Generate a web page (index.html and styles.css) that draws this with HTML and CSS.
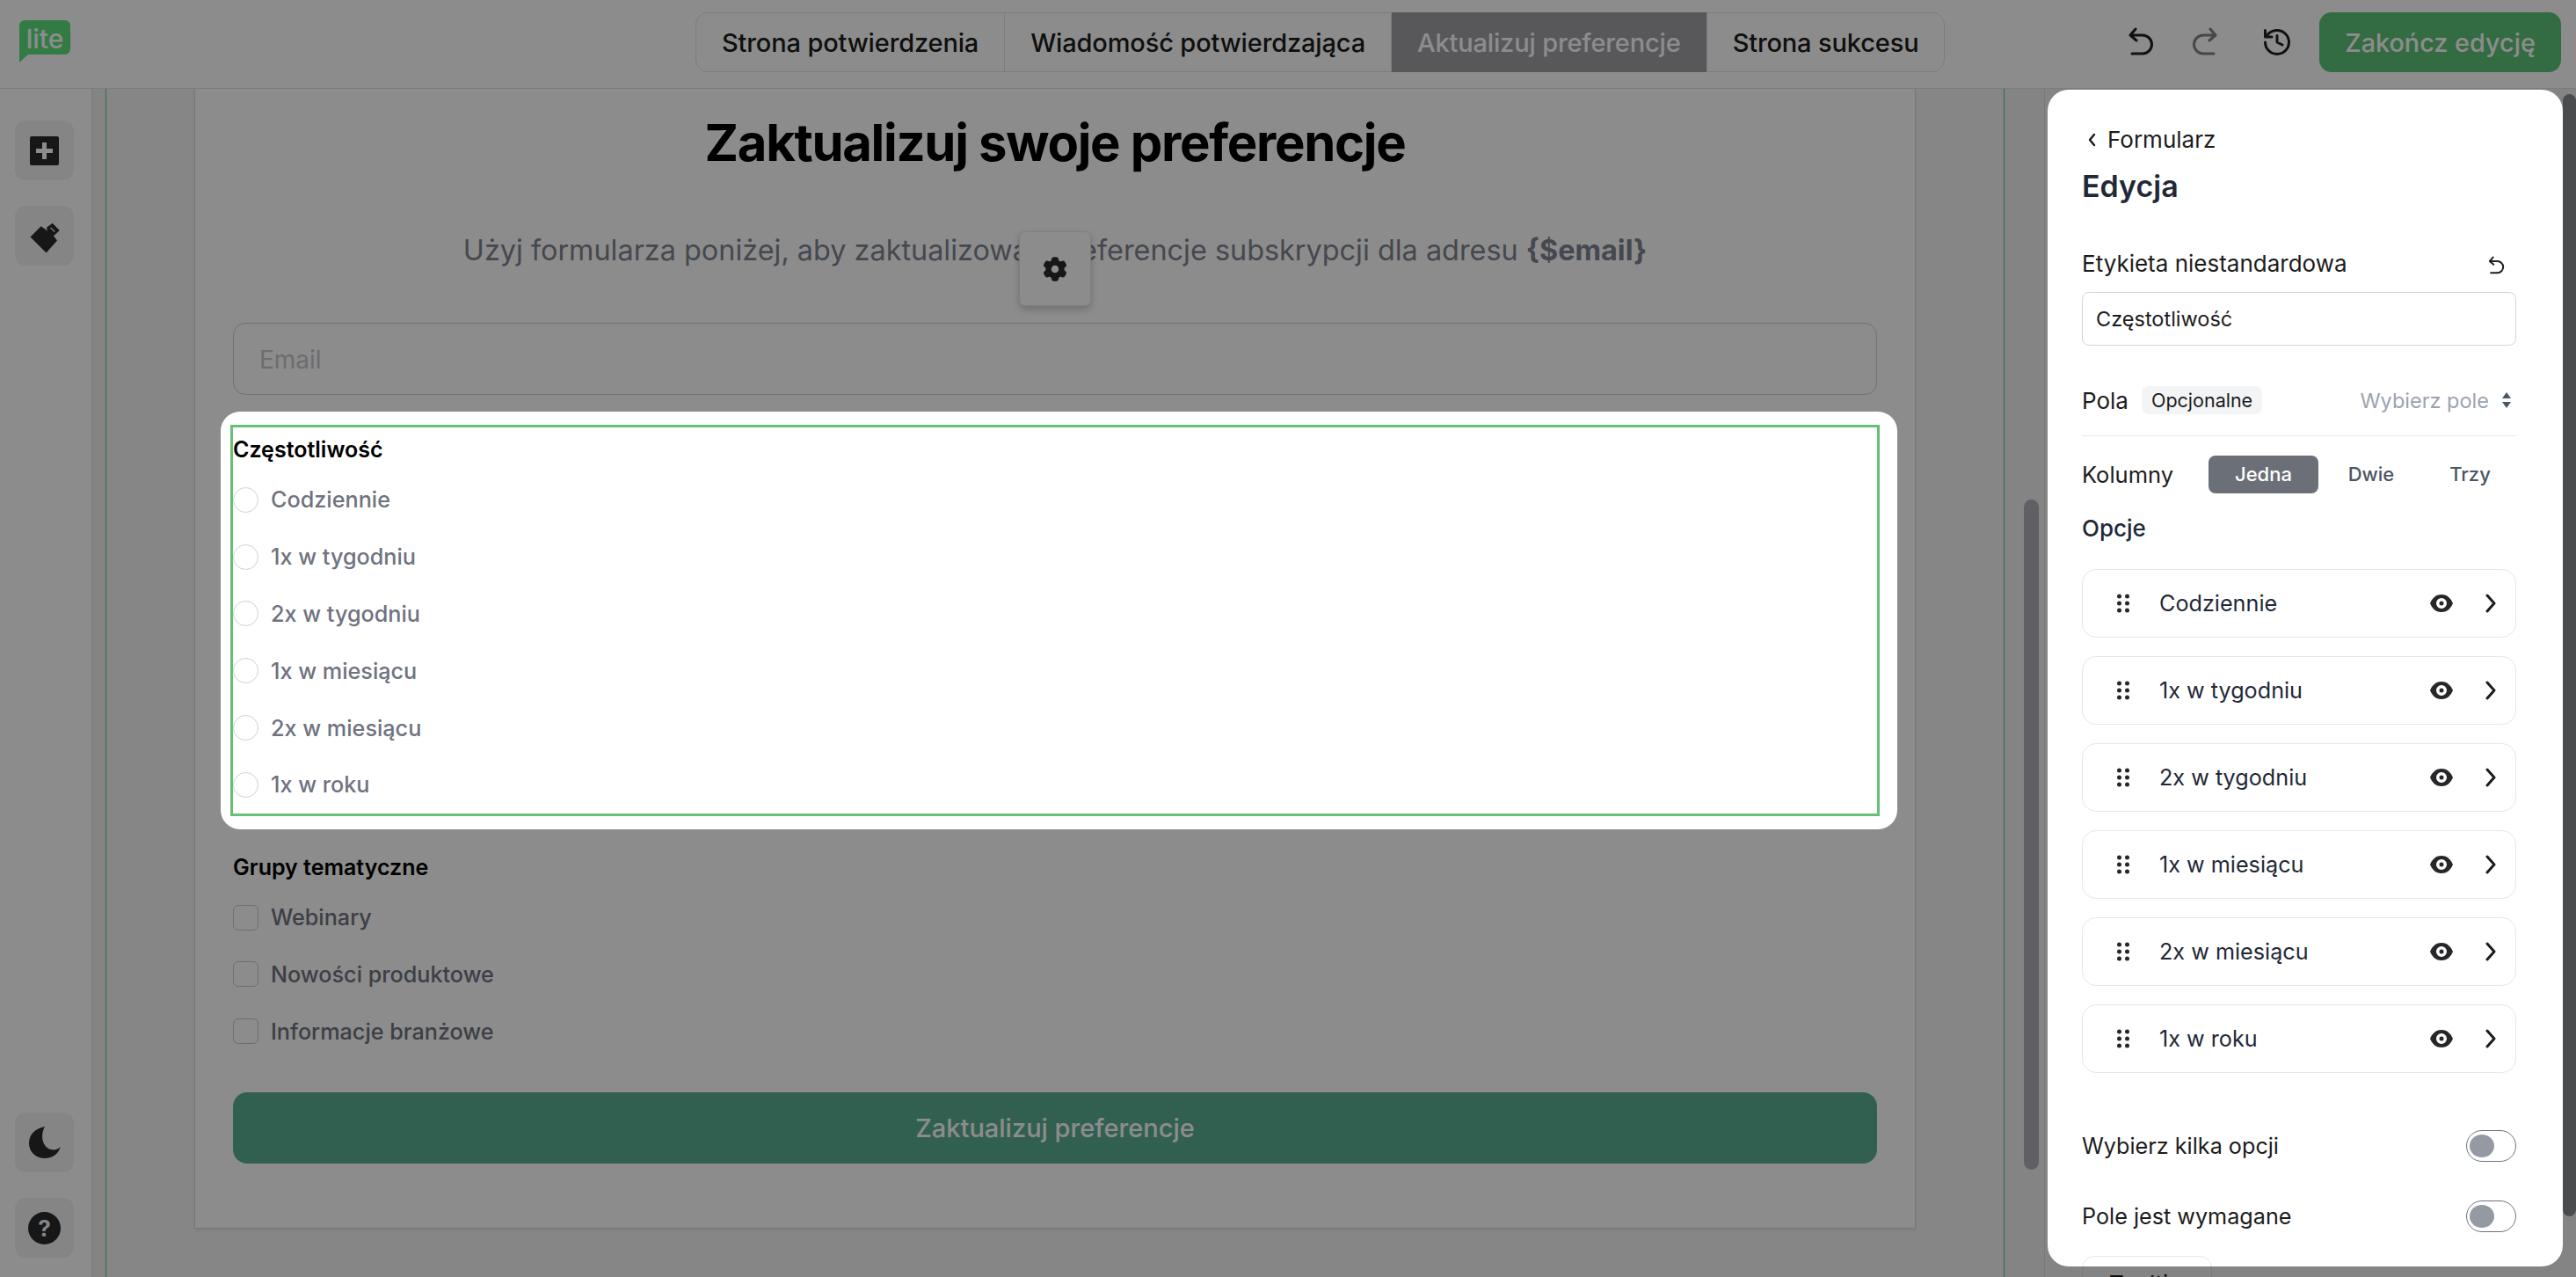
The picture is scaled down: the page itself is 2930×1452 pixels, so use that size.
FILE: index.html
```html
<!DOCTYPE html>
<html lang="pl">
<head>
    <meta charset="UTF-8">
    <title>Edycja formularza</title>
    <link rel="stylesheet" href="styles.css">
</head>
<body>
    <header class="topbar">
        <div class="logo">
            <svg width="58" height="48" viewBox="0 0 58 48">
                <path d="M6 0H52a6 6 0 0 1 6 6V33a6 6 0 0 1-6 6H10L0 48V6a6 6 0 0 1 6-6Z" fill="#5be07f"/>
                <text x="29" y="32" text-anchor="middle" class="logo-text">lite</text>
            </svg>
        </div>
        <nav class="tabs">
            <a class="tab">Strona potwierdzenia</a>
            <a class="tab">Wiadomość potwierdzająca</a>
            <a class="tab active">Aktualizuj preferencje</a>
            <a class="tab">Strona sukcesu</a>
        </nav>
        <div class="actions">
            <svg class="icon-undo" width="32" height="34" viewBox="0 0 32 34"><path d="M9 2 3 9l7 6M3 9h14a10.500 10.500 0 0 1 0 21H5"/></svg>
            <svg class="icon-undo redo" width="32" height="34" viewBox="0 0 32 34"><path d="M9 2 3 9l7 6M3 9h14a10.500 10.500 0 0 1 0 21H5"/></svg>
            <svg class="icon-history" width="36" height="36" viewBox="0 0 24 24"><path d="M3 12a9 9 0 1 0 9-9 9.750 9.750 0 0 0-6.740 2.740L3 8M3 3v5h5M12 7v5l4 2"/></svg>
            <button class="finish-btn">Zakończ edycję</button>
        </div>
    </header>

    <div class="workspace">
        <aside class="sidebar">
            <div class="side-group">
                <div class="side-btn"><span class="plus-box"></span></div>
                <div class="side-btn">
                    <svg width="40" height="42" viewBox="60 700 120 135">
                        <path d="M67 772 106 733l24 17-4-12 22-16 26 26-22 20 13 17-40 45Z" fill="#2a2a2c"/>
                        <path d="M141 738 156 753" stroke="#f3f3f3" stroke-width="4" fill="none"/>
                    </svg>
                </div>
            </div>
            <div class="side-group">
                <div class="side-btn">
                    <svg width="38" height="38" viewBox="0 0 38 38"><path d="M19 1C8 3 1 10 1 20c0 10 8 17 18 17 9 0 15-5 18-13-3 3-7 4-11 3C17 25 13 12 19 1Z" fill="#2a2a2c"/></svg>
                </div>
                <div class="side-btn"><span class="help">?</span></div>
            </div>
        </aside>

        <main class="stage">
            <div class="guides">
                <div class="canvas">
                    <h1>Zaktualizuj swoje preferencje</h1>
                    <p class="lead">Użyj formularza poniżej, aby zaktualizować preferencje subskrypcji dla adresu <b>{$email}</b></p>
                    <div class="gear-btn">
                        <svg width="34" height="34" viewBox="0 0 24 24"><path fill-rule="evenodd" d="M11.078 2.25c-.917 0-1.699.663-1.85 1.567L9.050 4.889c-.020.120-.115.260-.297.348a7.493 7.493 0 0 0-.986.570c-.166.115-.334.126-.450.083L6.300 5.508a1.875 1.875 0 0 0-2.282.819l-.922 1.597a1.875 1.875 0 0 0 .432 2.385l.840.692c.095.078.170.229.154.430a7.598 7.598 0 0 0 0 1.139c.015.200-.059.352-.153.430l-.841.692a1.875 1.875 0 0 0-.432 2.385l.922 1.597a1.875 1.875 0 0 0 2.282.818l1.019-.382c.115-.043.283-.031.450.082.312.214.641.405.985.570.182.088.277.228.297.350l.178 1.071c.151.904.933 1.567 1.850 1.567h1.844c.916 0 1.699-.663 1.850-1.567l.178-1.072c.020-.120.114-.260.297-.349.344-.165.673-.356.985-.570.167-.114.335-.125.450-.082l1.020.382a1.875 1.875 0 0 0 2.280-.819l.923-1.597a1.875 1.875 0 0 0-.432-2.385l-.840-.692c-.095-.078-.170-.229-.154-.430a7.614 7.614 0 0 0 0-1.139c-.016-.200.059-.352.153-.430l.840-.692c.708-.582.891-1.590.433-2.385l-.922-1.597a1.875 1.875 0 0 0-2.282-.818l-1.020.382c-.114.043-.282.031-.449-.083a7.490 7.490 0 0 0-.985-.570c-.183-.087-.277-.227-.297-.348l-.179-1.072a1.875 1.875 0 0 0-1.850-1.567h-1.843ZM12 15a3 3 0 1 0 0-6 3 3 0 0 0 0 6Z"/></svg>
                    </div>
                    <div class="email-field">Email</div>

                    <!-- highlighted block, sits above the dim layer -->
                    <section class="spotlight">
                        <div class="frame">
                            <div class="group-label">Częstotliwość</div>
                            <div class="group-list">
                                <label class="choice"><span class="radio"></span>Codziennie</label>
                                <label class="choice"><span class="radio"></span>1x w tygodniu</label>
                                <label class="choice"><span class="radio"></span>2x w tygodniu</label>
                                <label class="choice"><span class="radio"></span>1x w miesiącu</label>
                                <label class="choice"><span class="radio"></span>2x w miesiącu</label>
                                <label class="choice"><span class="radio"></span>1x w roku</label>
                            </div>
                        </div>
                    </section>

                    <div class="group-label topics">Grupy tematyczne</div>
                    <div class="group-list">
                        <label class="choice"><span class="check"></span>Webinary</label>
                        <label class="choice"><span class="check"></span>Nowości produktowe</label>
                        <label class="choice"><span class="check"></span>Informacje branżowe</label>
                    </div>
                    <button class="submit-btn">Zaktualizuj preferencje</button>
                </div>
            </div>
            <div class="stage-track"><div class="stage-thumb"></div></div>
        </main>

        <div class="right-col">
            <div class="panel-col">
                <aside class="panel">
                    <div class="back">
                        <svg width="12" height="16" viewBox="0 0 12 16"><path d="M8 2 3 8l5 6"/></svg>
                        Formularz
                    </div>
                    <h2>Edycja</h2>
                    <div class="field-head">
                        <span>Etykieta niestandardowa</span>
                        <svg class="icon-undo small" width="20" height="22" viewBox="0 0 32 34"><path d="M9 2 3 9l7 6M3 9h14a10.500 10.500 0 0 1 0 21H5"/></svg>
                    </div>
                    <div class="text-input">Częstotliwość</div>
                    <div class="fields-row">
                        <span>Pola</span>
                        <span class="tag">Opcjonalne</span>
                        <span class="picker">Wybierz pole
                            <svg width="12" height="20" viewBox="0 0 12 20"><path d="M6 1 11 8H1ZM6 19 1 12H11Z"/></svg>
                        </span>
                    </div>
                    <div class="columns-row">
                        <span class="columns-label">Kolumny</span>
                        <span class="seg seg-one active">Jedna</span>
                        <span class="seg seg-two">Dwie</span>
                        <span class="seg seg-three">Trzy</span>
                    </div>
                    <div class="options-title">Opcje</div>
                    <div class="options">
                        <div class="option"><svg class="dots" width="14" height="22" viewBox="0 0 14 22"><circle cx="2.500" cy="3" r="2.500"/><circle cx="11.500" cy="3" r="2.500"/><circle cx="2.500" cy="11" r="2.500"/><circle cx="11.500" cy="11" r="2.500"/><circle cx="2.500" cy="19" r="2.500"/><circle cx="11.500" cy="19" r="2.500"/></svg><span>Codziennie</span><svg class="eye" width="26" height="22" viewBox="0 0 26 20"><path fill-rule="evenodd" d="M13 0C6 0 2 5 0 10c2 5 6 10 13 10s11-5 13-10C24 5 20 0 13 0Zm0 4a6 6 0 1 1 0 12 6 6 0 0 1 0-12Zm0 3.500a2.500 2.500 0 1 0 0 5 2.500 2.500 0 0 0 0-5Z"/></svg><svg class="chev" width="14" height="22" viewBox="0 0 14 22"><path d="M3 2l8 9-8 9"/></svg></div>
                        <div class="option"><svg class="dots" width="14" height="22" viewBox="0 0 14 22"><circle cx="2.500" cy="3" r="2.500"/><circle cx="11.500" cy="3" r="2.500"/><circle cx="2.500" cy="11" r="2.500"/><circle cx="11.500" cy="11" r="2.500"/><circle cx="2.500" cy="19" r="2.500"/><circle cx="11.500" cy="19" r="2.500"/></svg><span>1x w tygodniu</span><svg class="eye" width="26" height="22" viewBox="0 0 26 20"><path fill-rule="evenodd" d="M13 0C6 0 2 5 0 10c2 5 6 10 13 10s11-5 13-10C24 5 20 0 13 0Zm0 4a6 6 0 1 1 0 12 6 6 0 0 1 0-12Zm0 3.500a2.500 2.500 0 1 0 0 5 2.500 2.500 0 0 0 0-5Z"/></svg><svg class="chev" width="14" height="22" viewBox="0 0 14 22"><path d="M3 2l8 9-8 9"/></svg></div>
                        <div class="option"><svg class="dots" width="14" height="22" viewBox="0 0 14 22"><circle cx="2.500" cy="3" r="2.500"/><circle cx="11.500" cy="3" r="2.500"/><circle cx="2.500" cy="11" r="2.500"/><circle cx="11.500" cy="11" r="2.500"/><circle cx="2.500" cy="19" r="2.500"/><circle cx="11.500" cy="19" r="2.500"/></svg><span>2x w tygodniu</span><svg class="eye" width="26" height="22" viewBox="0 0 26 20"><path fill-rule="evenodd" d="M13 0C6 0 2 5 0 10c2 5 6 10 13 10s11-5 13-10C24 5 20 0 13 0Zm0 4a6 6 0 1 1 0 12 6 6 0 0 1 0-12Zm0 3.500a2.500 2.500 0 1 0 0 5 2.500 2.500 0 0 0 0-5Z"/></svg><svg class="chev" width="14" height="22" viewBox="0 0 14 22"><path d="M3 2l8 9-8 9"/></svg></div>
                        <div class="option"><svg class="dots" width="14" height="22" viewBox="0 0 14 22"><circle cx="2.500" cy="3" r="2.500"/><circle cx="11.500" cy="3" r="2.500"/><circle cx="2.500" cy="11" r="2.500"/><circle cx="11.500" cy="11" r="2.500"/><circle cx="2.500" cy="19" r="2.500"/><circle cx="11.500" cy="19" r="2.500"/></svg><span>1x w miesiącu</span><svg class="eye" width="26" height="22" viewBox="0 0 26 20"><path fill-rule="evenodd" d="M13 0C6 0 2 5 0 10c2 5 6 10 13 10s11-5 13-10C24 5 20 0 13 0Zm0 4a6 6 0 1 1 0 12 6 6 0 0 1 0-12Zm0 3.500a2.500 2.500 0 1 0 0 5 2.500 2.500 0 0 0 0-5Z"/></svg><svg class="chev" width="14" height="22" viewBox="0 0 14 22"><path d="M3 2l8 9-8 9"/></svg></div>
                        <div class="option"><svg class="dots" width="14" height="22" viewBox="0 0 14 22"><circle cx="2.500" cy="3" r="2.500"/><circle cx="11.500" cy="3" r="2.500"/><circle cx="2.500" cy="11" r="2.500"/><circle cx="11.500" cy="11" r="2.500"/><circle cx="2.500" cy="19" r="2.500"/><circle cx="11.500" cy="19" r="2.500"/></svg><span>2x w miesiącu</span><svg class="eye" width="26" height="22" viewBox="0 0 26 20"><path fill-rule="evenodd" d="M13 0C6 0 2 5 0 10c2 5 6 10 13 10s11-5 13-10C24 5 20 0 13 0Zm0 4a6 6 0 1 1 0 12 6 6 0 0 1 0-12Zm0 3.500a2.500 2.500 0 1 0 0 5 2.500 2.500 0 0 0 0-5Z"/></svg><svg class="chev" width="14" height="22" viewBox="0 0 14 22"><path d="M3 2l8 9-8 9"/></svg></div>
                        <div class="option"><svg class="dots" width="14" height="22" viewBox="0 0 14 22"><circle cx="2.500" cy="3" r="2.500"/><circle cx="11.500" cy="3" r="2.500"/><circle cx="2.500" cy="11" r="2.500"/><circle cx="11.500" cy="11" r="2.500"/><circle cx="2.500" cy="19" r="2.500"/><circle cx="11.500" cy="19" r="2.500"/></svg><span>1x w roku</span><svg class="eye" width="26" height="22" viewBox="0 0 26 20"><path fill-rule="evenodd" d="M13 0C6 0 2 5 0 10c2 5 6 10 13 10s11-5 13-10C24 5 20 0 13 0Zm0 4a6 6 0 1 1 0 12 6 6 0 0 1 0-12Zm0 3.500a2.500 2.500 0 1 0 0 5 2.500 2.500 0 0 0 0-5Z"/></svg><svg class="chev" width="14" height="22" viewBox="0 0 14 22"><path d="M3 2l8 9-8 9"/></svg></div>
                    </div>
                    <div class="toggle-row first"><span>Wybierz kilka opcji</span><span class="toggle"></span></div>
                    <div class="toggle-row"><span>Pole jest wymagane</span><span class="toggle"></span></div>
                    <div class="peek"></div>
                </aside>
                <!-- the same box carries on under the dim layer below the panel -->
                <div class="peek under">Tooltip</div>
            </div>
            <div class="panel-thumb"></div>
        </div>
    </div>

    <div class="dim"></div>
</body>
</html>
```

FILE: styles.css
```css
* {
    box-sizing: border-box;
    margin: 0;
    padding: 0;
}

html, body {
    height: 100%;
    overflow: hidden;
}

body {
    font-family: Inter, "Noto Sans", sans-serif;
    font-size: 28px;
    color: #111;
    background-color: #f4f4f4;
}

svg {
    display: block;
    flex-shrink: 0;
}

/* dim layer over the whole editor */
.dim {
    position: fixed;
    inset: 0;
    z-index: 10;
    background-color: rgba(0, 0, 0, 0.45);
}

/* top bar */
.topbar {
    display: flex;
    align-items: center;
    height: 101px;
    padding-left: 22px;
    padding-right: 17px;
    background-color: #fff;
    border-bottom: 1px solid #e2e2e2;
}

.logo {
    width: 769px;
    margin-top: -6px;
}

.logo-text {
    font-family: Inter, sans-serif;
    font-size: 30px;
    font-weight: 500;
    fill: #fff;
}

.tabs {
    display: flex;
    height: 68px;
    margin-top: -4px;
    border: 1px solid #e2e2e2;
    border-radius: 14px;
}

.tab {
    display: flex;
    align-items: center;
    padding: 0 29px;
    font-size: 29px;
    font-weight: 500;
    letter-spacing: -0.15px;
    color: #1c1c1c;
    border-right: 1px solid #e2e2e2;
}

.tab:last-child {
    border-right: none;
}

.tab.active {
    margin: -1px 0;
    background-color: #a0a0a7;
    color: #fff;
}

.actions {
    display: flex;
    align-items: center;
    margin-left: auto;
    margin-top: -4px;
}

.icon-undo path,
.icon-history path {
    fill: none;
    stroke: #1f1f1f;
    stroke-width: 3;
    stroke-linecap: round;
    stroke-linejoin: round;
}

.icon-history path {
    stroke-width: 2;
}

.icon-undo.redo {
    margin-left: 39px;
    transform: scaleX(-1);
}

.icon-undo.redo path {
    stroke: #808286;
}

.icon-undo.small {
    margin-top: 3px;
}

.icon-undo.small path {
    stroke-width: 3.200;
}

.icon-history {
    margin-left: 49px;
}

.finish-btn {
    width: 275px;
    height: 68px;
    margin-left: 30px;
    font-family: inherit;
    font-size: 28.800px;
    font-weight: 500;
    color: #fff;
    background-color: #5dc378;
    border: none;
    border-radius: 14px;
}

.workspace {
    display: flex;
    height: 1351px;
}

/* left icon column */
.sidebar {
    display: flex;
    flex-direction: column;
    justify-content: space-between;
    width: 105px;
    padding: 36px 0 22px 17px;
    background-color: #fff;
    border-right: 1px solid #dfdfdf;
}

.side-group {
    display: flex;
    flex-direction: column;
    gap: 29px;
}

.side-btn {
    display: flex;
    align-items: center;
    justify-content: center;
    width: 67px;
    height: 68px;
    background-color: #f3f3f3;
    border-radius: 12px;
}

.plus-box {
    position: relative;
    width: 33px;
    height: 33px;
    background-color: #2a2a2c;
    border-radius: 2px;
}

.plus-box::before,
.plus-box::after {
    content: "";
    position: absolute;
    background-color: #fff;
}

.plus-box::before {
    left: 7px;
    top: 14px;
    width: 19px;
    height: 5px;
}

.plus-box::after {
    left: 14px;
    top: 7px;
    width: 5px;
    height: 19px;
}

.help {
    width: 37px;
    height: 37px;
    font-size: 26px;
    font-weight: 700;
    line-height: 37px;
    text-align: center;
    color: #f3f3f3;
    background-color: #2a2a2c;
    border-radius: 50%;
}

/* middle area */
.stage {
    display: flex;
    width: 2220px;
    padding-left: 15px;
    background-color: #f1f1f1;
}

.guides {
    width: 2160px;
    padding: 0 100px;
    background-color: #f5f5f5;
    border-left: 1px solid #55c677;
    border-right: 1px solid #55c677;
}

.canvas {
    position: relative;
    padding: 25px 43px 73px;
    background-color: #fff;
    border-left: 1px solid #d9d9d9;
    border-right: 1px solid #d9d9d9;
    border-bottom: 1px solid #d9d9d9;
    box-shadow: 0 2px 4px rgba(0, 0, 0, 0.08);
}

h1 {
    font-size: 58px;
    font-weight: 700;
    letter-spacing: -1.3px;
    line-height: 72px;
    text-align: center;
    color: #000;
}

.lead {
    margin-top: 65px;
    font-size: 32.400px;
    line-height: 44px;
    text-align: center;
    color: #7f8390;
}

.gear-btn {
    position: absolute;
    left: 937px;
    top: 162px;
    display: flex;
    align-items: center;
    justify-content: center;
    width: 82px;
    height: 85px;
    background-color: #fff;
    border: 1px solid #e6e6e6;
    border-radius: 6px;
    box-shadow: 0 4px 8px rgba(0, 0, 0, 0.2);
}

.gear-btn svg {
    fill: #2a2a2c;
}

.email-field {
    display: flex;
    align-items: center;
    height: 82px;
    margin-top: 60px;
    padding: 2px 0 0 29px;
    font-size: 28px;
    color: #c6c6ca;
    border: 1px solid #cfcfcf;
    border-radius: 14px;
}

.spotlight {
    position: relative;
    z-index: 11;
    margin: 19px -23px 0 -14px;
    padding: 15px 20px 15px 11px;
    background-color: #fff;
    border-radius: 22px;
}

.frame {
    padding-top: 7px;
    border: 3px solid #66c076;
}

.group-label {
    font-size: 25px;
    font-weight: 600;
    line-height: 36px;
    color: #000;
}

.topics {
    margin-top: 25px;
}

.group-list {
    margin-top: 7px;
}

.choice {
    display: flex;
    align-items: center;
    gap: 14px;
    height: 64.8px;
    font-size: 25.200px;
    font-weight: 500;
    color: #6f7380;
}

.radio,
.check {
    width: 29px;
    height: 29px;
    background-color: #fff;
    border: 1px solid #d0d0d0;
}

.radio {
    border-radius: 50%;
}

.check {
    border-color: #c8c8c8;
    border-radius: 6px;
}

.submit-btn {
    display: block;
    width: 100%;
    height: 81px;
    margin-top: 37px;
    font-family: inherit;
    font-size: 29px;
    font-weight: 500;
    color: #fff;
    background-color: #59b093;
    border: none;
    border-radius: 16px;
}

.stage-track {
    padding: 467px 0 0 22px;
}

.stage-thumb {
    width: 17px;
    height: 762px;
    background-color: #abafb4;
    border-radius: 9px;
}

/* right column with the edit panel */
.right-col {
    display: flex;
    width: 605px;
    padding-left: 3px;
    background-color: #f1f1f1;
    border-left: 1px solid #dfdfdf;
}

.panel-col {
    width: 586px;
}

.panel {
    position: relative;
    z-index: 11;
    height: 1338px;
    margin-top: 1px;
    padding: 39px 53px 0 39px;
    overflow: hidden;
    font-size: 26px;
    background-color: #fff;
    border-radius: 24px;
}

.back {
    display: flex;
    align-items: center;
    gap: 11px;
    padding-left: 6px;
    line-height: 36px;
    color: #1c1c1c;
}

.back svg path,
.chev path {
    fill: none;
    stroke: #1c1c1c;
    stroke-width: 2.500;
    stroke-linecap: round;
    stroke-linejoin: round;
}

h2 {
    margin-top: 13px;
    font-size: 34px;
    font-weight: 600;
    line-height: 44px;
    color: #1f2937;
}

.field-head {
    display: flex;
    align-items: center;
    justify-content: space-between;
    margin-top: 48px;
    padding-right: 12px;
    line-height: 36px;
    color: #1c1c1c;
}

.text-input {
    display: flex;
    align-items: center;
    height: 61px;
    margin-top: 14px;
    padding-left: 15px;
    font-size: 23.500px;
    color: #1c1c1c;
    border: 1px solid #d1d5db;
    border-radius: 8px;
}

.fields-row {
    display: flex;
    align-items: center;
    height: 36px;
    margin-top: 44px;
    color: #1c1c1c;
}

.tag {
    margin-left: 15px;
    padding: 0 11px;
    font-size: 21.500px;
    line-height: 32px;
    background-color: #f3f4f6;
    border-radius: 8px;
}

.picker {
    display: flex;
    align-items: center;
    gap: 14px;
    margin-left: auto;
    padding-right: 5px;
    font-size: 23.500px;
    color: #9ca3af;
}

.picker svg {
    fill: #4b5563;
}

.columns-row {
    display: flex;
    align-items: center;
    height: 65px;
    margin-top: 22px;
    padding-top: 22px;
    border-top: 1px solid #e5e7eb;
}

.columns-label {
    width: 144px;
    font-size: 25.500px;
    color: #1c1c1c;
}

.seg {
    height: 43px;
    font-size: 22px;
    font-weight: 500;
    line-height: 43px;
    text-align: center;
    color: #4b5563;
}

.seg-one {
    width: 125px;
}

.seg-two {
    width: 120px;
}

.seg-three {
    width: 105px;
}

.seg.active {
    color: #fff;
    background-color: #6b7078;
    border-radius: 8px;
}

.options-title {
    margin-top: 23px;
    font-weight: 500;
    line-height: 36px;
    color: #1f2937;
}

.options {
    display: flex;
    flex-direction: column;
    gap: 21px;
    margin-top: 28px;
}

.option {
    display: flex;
    align-items: center;
    height: 78px;
    padding: 0 21px 0 39px;
    font-size: 25.200px;
    color: #1f2937;
    border: 1px solid #e5e7eb;
    border-radius: 16px;
}

.option span {
    margin-left: 34px;
}

.dots {
    fill: #27272a;
}

.eye {
    margin-left: auto;
    fill: #27272a;
}

.chev {
    margin-left: 36px;
}

.chev path {
    stroke-width: 3;
}

.toggle-row {
    display: flex;
    align-items: center;
    justify-content: space-between;
    height: 40px;
    margin-top: 40px;
    font-size: 25.200px;
    color: #1c1c1c;
}

.toggle-row.first {
    margin-top: 63px;
}

.toggle {
    position: relative;
    width: 57px;
    height: 36px;
    border: 1px solid #6b7280;
    border-radius: 18px;
}

.toggle::after {
    content: "";
    position: absolute;
    left: 3px;
    top: 4px;
    width: 28px;
    height: 26px;
    background-color: #9499a3;
    border-radius: 50%;
}

.peek {
    width: 148px;
    height: 70px;
    margin-top: 25px;
    border: 1px solid #e5e7eb;
    border-radius: 14px;
}

.peek.under {
    height: 60px;
    margin-top: -11px;
    margin-left: 39px;
    padding: 14px 0 0 30px;
    font-size: 26px;
    color: #1c1c1c;
    border-color: #dcdcdc;
}

.panel-thumb {
    width: 15px;
    height: 1276px;
    margin-top: 6px;
    background-color: #878c91;
    border-radius: 8px;
}
```
